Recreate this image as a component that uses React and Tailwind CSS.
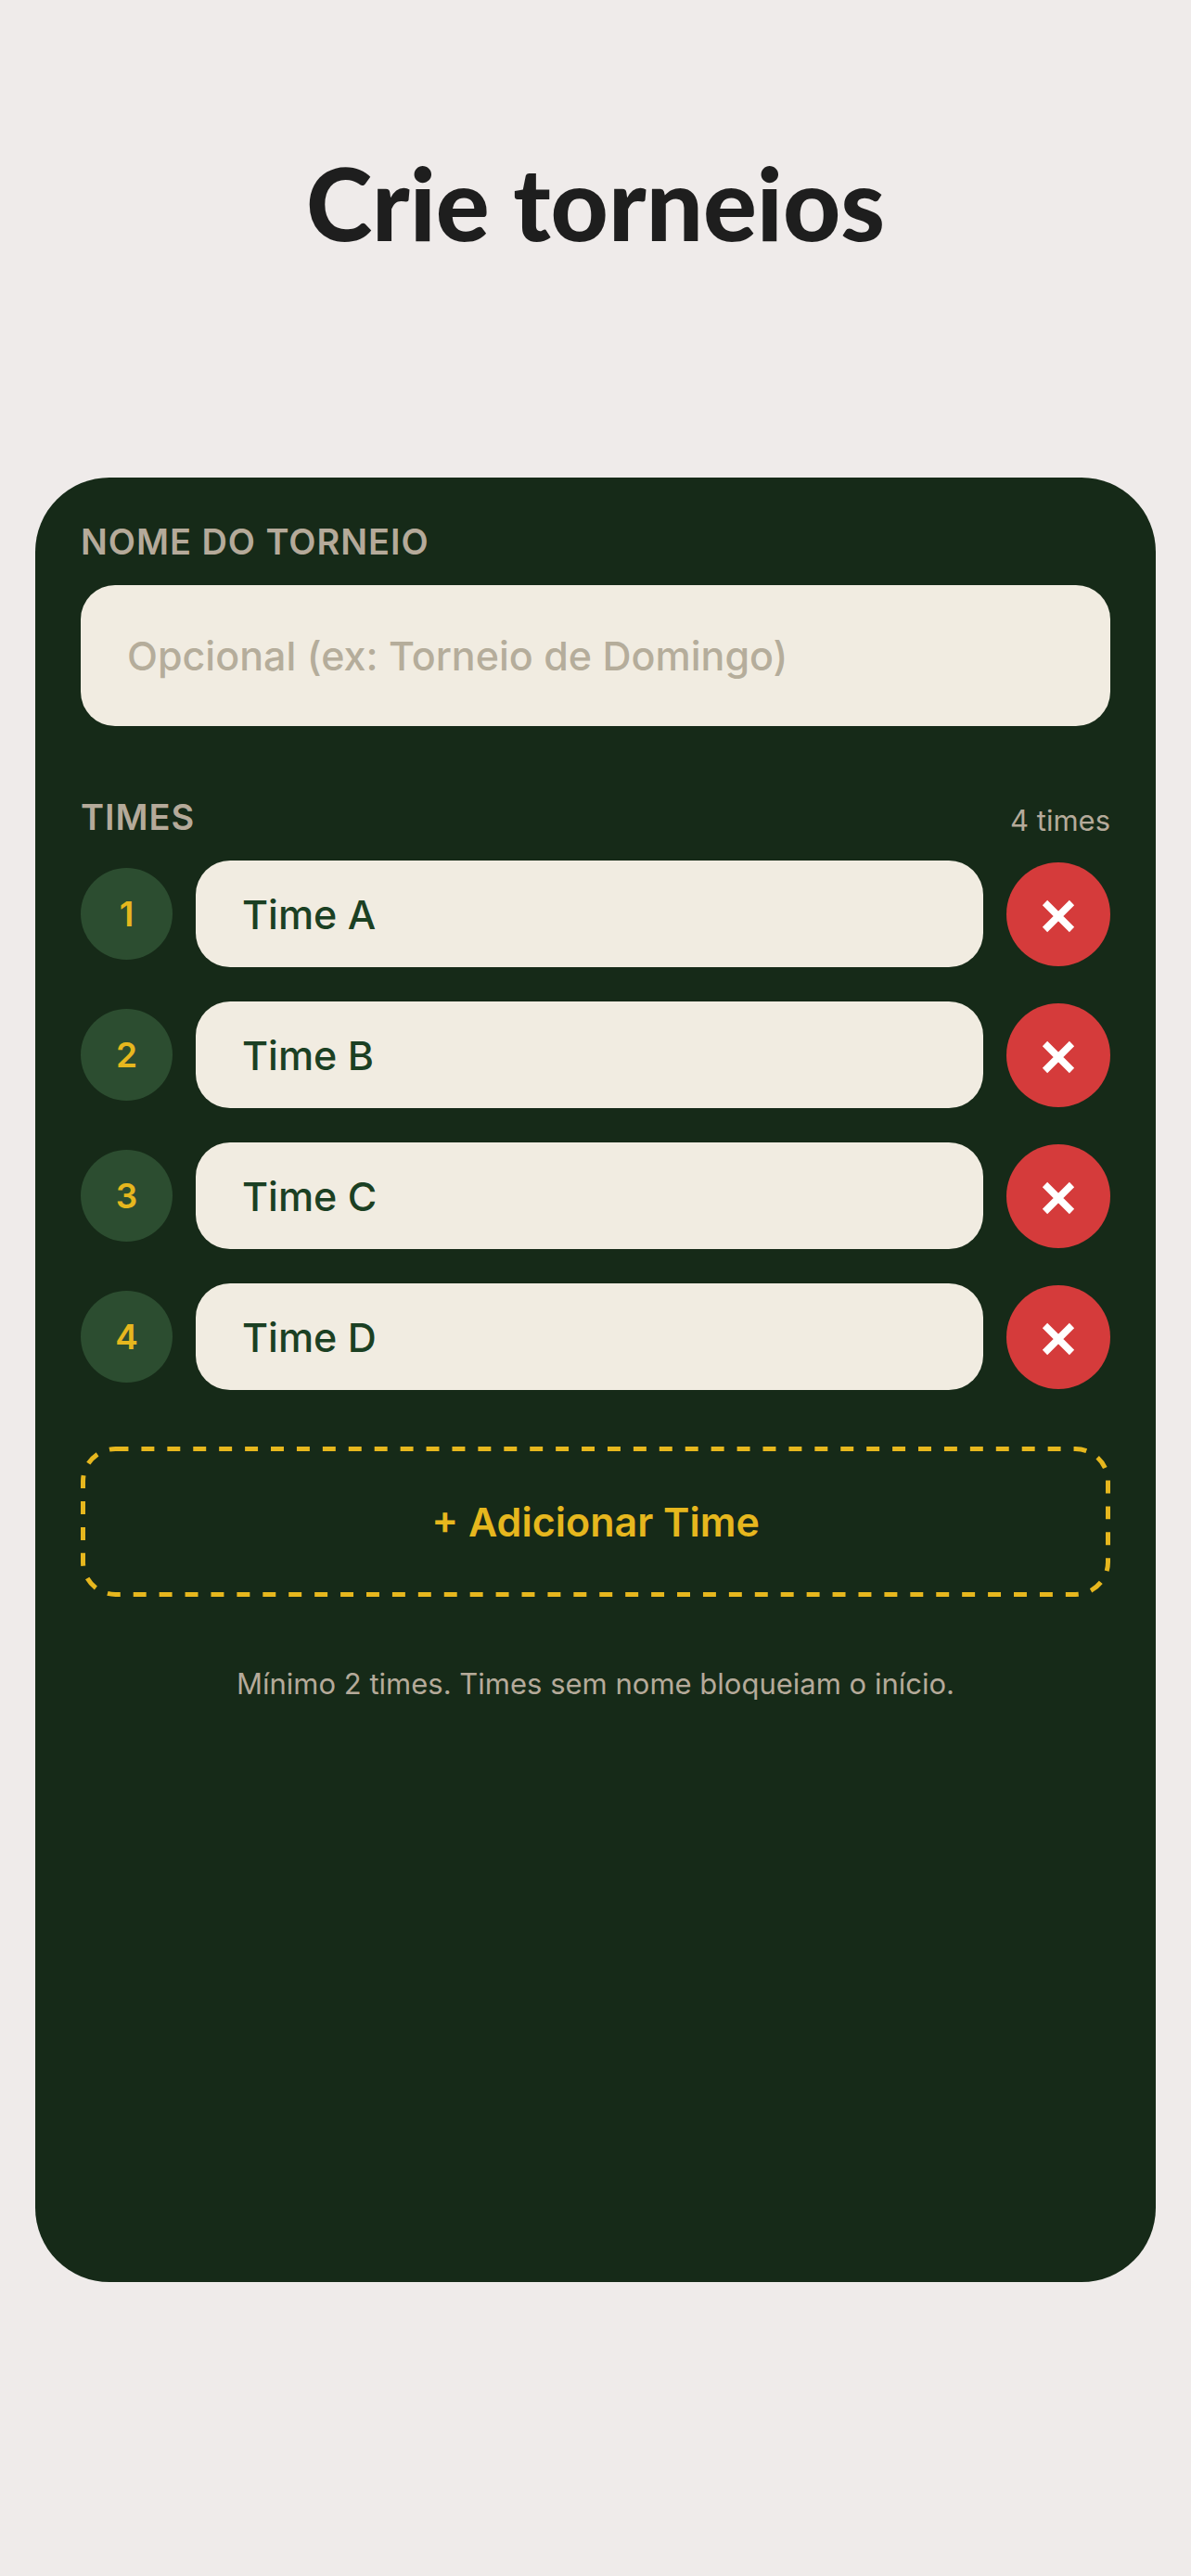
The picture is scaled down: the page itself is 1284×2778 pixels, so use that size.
import React, { useState } from "react";

const RemoveIcon = () => (
  <svg className="w-9 h-9 mt-1" viewBox="0 0 36 36" fill="none" aria-hidden="true">
    <path d="M3.5 3.5 32.5 32.5M32.5 3.5 3.5 32.5" stroke="currentColor" strokeWidth="7.5" />
  </svg>
);

// Dashed outline, drawn as svg so the dashes keep an even rhythm around the corners
const DashedOutline = () => (
  <svg className="absolute inset-0 w-full h-full overflow-visible" aria-hidden="true">
    <rect
      className="w-[calc(100%-5px)] h-[calc(100%-5px)]"
      x="2.5"
      y="2.5"
      rx="35"
      fill="none"
      stroke="#e6b71e"
      strokeWidth="5"
      strokeDasharray="13.96 13.96"
    />
  </svg>
);

const TeamRow = ({ number, name, onChange, onRemove }) => {
  return (
    <li className="flex items-center gap-[25px]">
      <span className="shrink-0 w-[99px] h-[99px] rounded-full bg-[#2c4d30] text-[#e6b71e] text-[37px] font-semibold flex items-center justify-center">
        {number}
      </span>
      <input
        type="text"
        aria-label={`Nome do time ${number}`}
        value={name}
        onChange={(e) => onChange(e.target.value)}
        className="flex-1 min-w-0 h-[115px] px-[50px] rounded-[37px] bg-[#f1ece1] text-[#1b4023] text-[43px] font-medium outline-none"
      />
      <button
        type="button"
        aria-label={`Remover time ${number}`}
        onClick={onRemove}
        className="shrink-0 w-28 h-28 rounded-full bg-[#d53b3b] text-white flex items-center justify-center"
      >
        <RemoveIcon />
      </button>
    </li>
  );
};

const App = () => {
  const [tournament, setTournament] = useState("");
  const [teams, setTeams] = useState(["Time A", "Time B", "Time C", "Time D"]);

  const renameTeam = (index, value) => {
    setTeams(teams.map((team, i) => (i === index ? value : team)));
  };

  const removeTeam = (index) => {
    setTeams(teams.filter((_, i) => i !== index));
  };

  return (
    <div className="min-h-screen flex flex-col bg-[#efebea] px-[38px] pb-[317px] font-['Inter',sans-serif]">
      <h1 className="pt-[154px] pb-[233px] text-center text-[108px] leading-[128px] font-black text-[#1e1e1e] font-['Lato',sans-serif]">
        Crie torneios
      </h1>

      <main className="flex-1 rounded-[80px] bg-[#162a18] px-[49px] pt-[46px] pb-20">
        <label
          htmlFor="tournament"
          className="block text-[38px] leading-[46px] font-semibold tracking-wide text-[#b5aa9a]"
        >
          NOME DO TORNEIO
        </label>
        <input
          id="tournament"
          type="text"
          value={tournament}
          onChange={(e) => setTournament(e.target.value)}
          placeholder="Opcional (ex: Torneio de Domingo)"
          className="w-full h-[152px] mt-6 px-[50px] rounded-[37px] bg-[#f1ece1] text-[#1b4023] placeholder:text-[#b5ad9b] text-[43px] font-medium outline-none"
        />

        <div className="flex items-end justify-between mt-[75px] mb-6 text-[#b5aa9a]">
          <h2 className="text-[38px] leading-[46px] font-semibold tracking-wide">TIMES</h2>
          <span className="text-[31px] leading-[38px]">{teams.length} times</span>
        </div>

        <ul className="flex flex-col gap-[37px]">
          {teams.map((team, index) => (
            <TeamRow
              key={index}
              number={index + 1}
              name={team}
              onChange={(value) => renameTeam(index, value)}
              onRemove={() => removeTeam(index)}
            />
          ))}
        </ul>

        <button
          type="button"
          onClick={() => setTeams([...teams, ""])}
          className="relative w-full h-[162px] mt-[61px] rounded-[37px] text-[#e6b71e] text-[43px] font-semibold"
        >
          <DashedOutline />
          + Adicionar Time
        </button>

        <p className="mt-[75px] text-center text-[31px] leading-[38px] text-[#b5aa9a]">
          Mínimo 2 times. Times sem nome bloqueiam o início.
        </p>
      </main>
    </div>
  );
};

export default App;
